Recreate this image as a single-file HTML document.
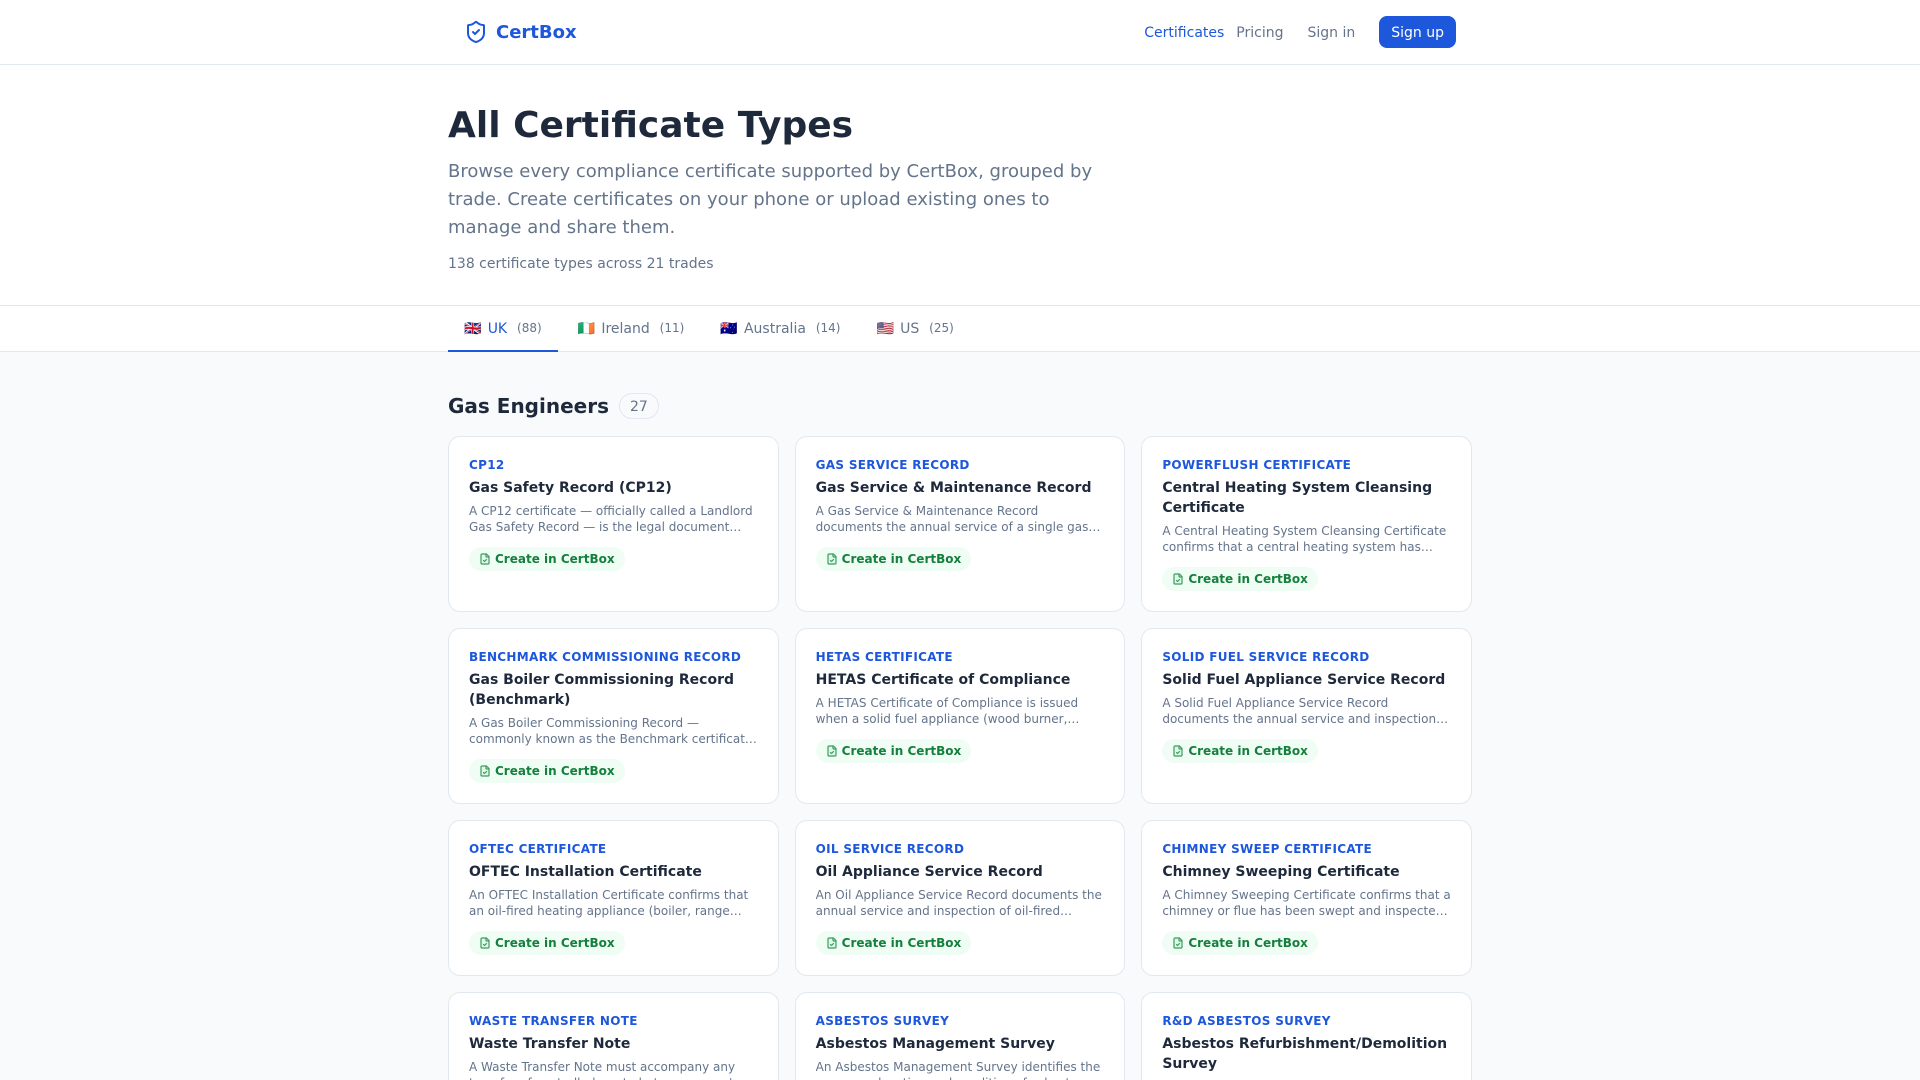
<!DOCTYPE html>
<html lang="en"><head><meta charset="utf-8"><title>All Certificate Types - CertBox</title>
<style>
*{box-sizing:border-box;margin:0;padding:0}
html,body{width:1920px;height:1080px;overflow:hidden}
body{background:#f8fafc;font-family:"DejaVu Sans",sans-serif;color:#1e293b;font-size:14px;line-height:20px}
a{text-decoration:none;color:inherit}
.wrap{width:1024px;margin:0 auto}
nav{height:65px;background:#fff;border-bottom:1px solid #e2e8f0}
nav .wrap{height:64px;padding:0 16px;display:flex;align-items:center}
.logo{display:flex;align-items:center;gap:8px;color:#1d57db;font-weight:700;font-size:18px}
.logo span{position:relative;top:1px}
.links{margin-left:auto;display:flex;align-items:center;color:#64748b}
.links a{position:relative;top:1px}
.links a.btn{top:0;background:#1d57db;color:#fff;height:32px;line-height:34px;padding:0 12px;border-radius:8px;margin-left:24px}
header{height:241px;background:#fff;border-bottom:1px solid #e2e8f0;padding-top:41px}
h1{font-size:36px;line-height:40px;font-weight:700}
header p{font-size:18px;line-height:28px;color:#64748b;width:672px;margin-top:12px}
header .c{font-size:14px;line-height:20px;color:#64748b;margin-top:12px}
.tabs{height:46px;background:#fff;border-bottom:1px solid #e2e8f0}
.tabs .wrap{display:flex;gap:4px}
.tab{height:46px;padding:0 16px;line-height:46px;color:#64748b;display:flex;white-space:pre;border-bottom:2px solid transparent}
.tab.on{color:#1d57db;border-color:#1d57db}
.tab i{font-style:normal;width:23.7px;display:block}
.tab small{font-size:12px;color:#64748b;margin-left:9.9px;position:relative;top:-1px}
h2{font-size:20px;line-height:28px;font-weight:700;display:flex;align-items:center;margin-top:40px;height:28px}
h2 span{font-size:14px;font-weight:400;color:#64748b;background:#f8fafc;border:1px solid #e2e8f0;border-radius:13px;height:26px;line-height:26px;padding:0 10px;margin-left:10px}
.grid{display:grid;grid-template-columns:repeat(3,1fr);gap:16px;margin-top:16px}
.card{background:#fff;border:1px solid #e2e8f0;border-radius:12px;padding:20px}
.k{font-size:12px;line-height:16px;font-weight:700;color:#1d57db;text-transform:uppercase;letter-spacing:.3px}
.t{font-size:14px;line-height:20px;font-weight:700;margin-top:5px}
.d{font-size:12px;line-height:16px;color:#64748b;margin-top:5px;display:-webkit-box;-webkit-line-clamp:2;-webkit-box-orient:vertical;overflow:hidden}
.p{display:inline-flex;align-items:center;gap:4px;height:24px;margin-top:12px;padding:0 10px;border-radius:12px;background:#f0fdf4;color:#15803d;font-size:12px;font-weight:700;vertical-align:top}
.p svg{opacity:.8}
</style></head><body>
<svg width="0" height="0" style="position:absolute"><defs><symbol id="f" viewBox="0 0 24 24"><g fill="none" stroke="#15803d" stroke-width="2.4" stroke-linecap="round" stroke-linejoin="round"><path fill="#bbf7d0" fill-opacity=".5" d="M15 2H6a2 2 0 0 0-2 2v16a2 2 0 0 0 2 2h12a2 2 0 0 0 2-2V7Z"/><path d="M14 2v4a2 2 0 0 0 2 2h4"/><path d="m9 15 2 2 4-4"/></g></symbol></defs></svg>
<nav><div class="wrap">
<a class="logo"><svg width="24" height="24" viewBox="0 0 24 24" fill="none" stroke="#1d57db" stroke-width="2" stroke-linecap="round" stroke-linejoin="round"><path d="M20 13c0 5-3.5 7.5-7.66 8.95a1 1 0 0 1-.67-.01C7.5 20.5 4 18 4 13V6a1 1 0 0 1 1-1c2 0 4.5-1.2 6.24-2.72a1.17 1.17 0 0 1 1.52 0C14.51 3.81 17 5 19 5a1 1 0 0 1 1 1z"/><path d="m9 12 2 2 4-4"/></svg><span>CertBox</span></a>
<div class="links"><a style="color:#1d57db">Certificates</a><a style="margin-left:12px">Pricing</a><a style="margin-left:24px">Sign in</a><a class="btn">Sign up</a></div>
</div></nav>
<header><div class="wrap">
<h1>All Certificate Types</h1>
<p>Browse every compliance certificate supported by CertBox, grouped by trade. Create certificates on your phone or upload existing ones to manage and share them.</p>
<div class="c">138 certificate types across 21 trades</div>
</div></header>
<div class="tabs"><div class="wrap">
<a class="tab on"><i>🇬🇧</i>UK<small>(88)</small></a><a class="tab"><i>🇮🇪</i>Ireland<small>(11)</small></a><a class="tab"><i>🇦🇺</i>Australia<small>(14)</small></a><a class="tab"><i>🇺🇸</i>US<small>(25)</small></a>
</div></div>
<main class="wrap">
<h2>Gas Engineers<span>27</span></h2>
<div class="grid">
<div class="card"><div class="k">CP12</div><div class="t">Gas Safety Record (CP12)</div><div class="d">A CP12 certificate — officially called a Landlord Gas Safety Record — is the legal document…</div><a class="p"><svg width="12" height="12"><use href="#f"/></svg>Create in CertBox</a></div>
<div class="card"><div class="k">Gas Service Record</div><div class="t">Gas Service &amp; Maintenance Record</div><div class="d">A Gas Service &amp; Maintenance Record documents the annual service of a single gas appliance, including the checks and readings taken by the engineer.</div><a class="p"><svg width="12" height="12"><use href="#f"/></svg>Create in CertBox</a></div>
<div class="card"><div class="k">Powerflush Certificate</div><div class="t">Central Heating System Cleansing Certificate</div><div class="d">A Central Heating System Cleansing Certificate confirms that a central heating system has been flushed and treated with inhibitor by the engineer.</div><a class="p"><svg width="12" height="12"><use href="#f"/></svg>Create in CertBox</a></div>
<div class="card"><div class="k">Benchmark Commissioning Record</div><div class="t">Gas Boiler Commissioning Record (Benchmark)</div><div class="d">A Gas Boiler Commissioning Record — commonly known as the Benchmark certificate — confirms that a new boiler has been installed correctly.</div><a class="p"><svg width="12" height="12"><use href="#f"/></svg>Create in CertBox</a></div>
<div class="card"><div class="k">HETAS Certificate</div><div class="t">HETAS Certificate of Compliance</div><div class="d">A HETAS Certificate of Compliance is issued when a solid fuel appliance (wood burner, multi-fuel stove or similar) has been installed by a registered installer.</div><a class="p"><svg width="12" height="12"><use href="#f"/></svg>Create in CertBox</a></div>
<div class="card"><div class="k">Solid Fuel Service Record</div><div class="t">Solid Fuel Appliance Service Record</div><div class="d">A Solid Fuel Appliance Service Record documents the annual service and inspection of a solid fuel appliance and its flue by the engineer.</div><a class="p"><svg width="12" height="12"><use href="#f"/></svg>Create in CertBox</a></div>
<div class="card"><div class="k">OFTEC Certificate</div><div class="t">OFTEC Installation Certificate</div><div class="d">An OFTEC Installation Certificate confirms that an oil-fired heating appliance (boiler, range cooker or tank) has been installed to the required standard.</div><a class="p"><svg width="12" height="12"><use href="#f"/></svg>Create in CertBox</a></div>
<div class="card"><div class="k">Oil Service Record</div><div class="t">Oil Appliance Service Record</div><div class="d">An Oil Appliance Service Record documents the annual service and inspection of oil-fired…</div><a class="p"><svg width="12" height="12"><use href="#f"/></svg>Create in CertBox</a></div>
<div class="card"><div class="k">Chimney Sweep Certificate</div><div class="t">Chimney Sweeping Certificate</div><div class="d">A Chimney Sweeping Certificate confirms that a chimney or flue has been swept and inspected by a qualified chimney sweep for insurance.</div><a class="p"><svg width="12" height="12"><use href="#f"/></svg>Create in CertBox</a></div>
<div class="card"><div class="k">Waste Transfer Note</div><div class="t">Waste Transfer Note</div><div class="d">A Waste Transfer Note must accompany any transfer of controlled waste between operators in the United Kingdom, recording what was moved.</div><a class="p"><svg width="12" height="12"><use href="#f"/></svg>Create in CertBox</a></div>
<div class="card"><div class="k">Asbestos Survey</div><div class="t">Asbestos Management Survey</div><div class="d">An Asbestos Management Survey identifies the presence, location and condition of asbestos containing materials in a building.</div><a class="p"><svg width="12" height="12"><use href="#f"/></svg>Create in CertBox</a></div>
<div class="card"><div class="k">R&amp;D Asbestos Survey</div><div class="t">Asbestos Refurbishment/Demolition Survey</div><div class="d">A survey required before refurbishment or demolition work begins, locating all asbestos containing materials in the affected area.</div><a class="p"><svg width="12" height="12"><use href="#f"/></svg>Create in CertBox</a></div>
</div>
</main>
</body></html>
